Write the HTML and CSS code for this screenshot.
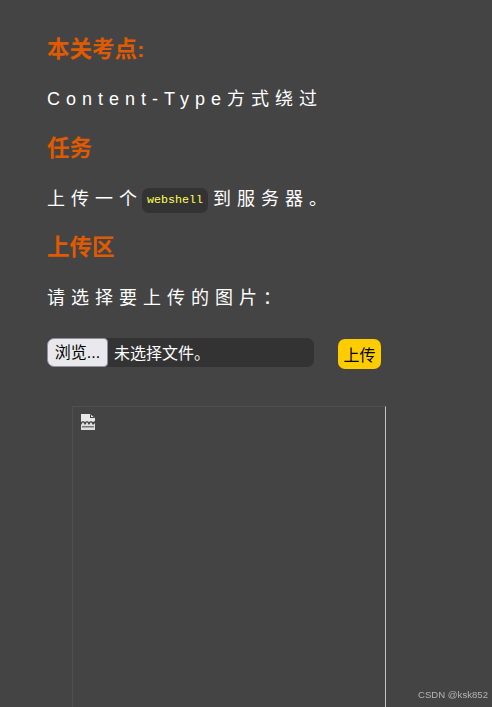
FILE: index.html
```html
<!DOCTYPE html>
<html lang="zh-CN">
<head>
<meta charset="utf-8">
<title>上传</title>
<link rel="stylesheet" href="styles.css">
</head>
<body>
<main class="page">
  <h3 class="title">本关考点:</h3>
  <p class="text lead">Content-Type方式绕过</p>
  <h3 class="title">任务</h3>
  <p class="text">上传一个<code class="code">webshell</code>到服务器。</p>
  <h3 class="title">上传区</h3>
  <p class="text">请选择要上传的图片：</p>
  <form class="upload">
    <div class="file">
      <span class="browse">浏览...</span>
      <span class="file-name">未选择文件。</span>
    </div>
    <button class="submit" type="button">上传</button>
  </form>
  <div class="preview">
    <svg class="broken" width="16" height="17" viewBox="0 0 16 17" aria-hidden="true">
      <path fill="#e8e8e8" d="M1 1h9l5 4v3l-2 1-2-1-2 1-2-1-2 1-2-1-2 1z"/>
      <path fill="#444444" d="M10 1v4h5l-1-1h-3V2z"/>
      <path fill="#e0e0e0" d="M1 12l2-3 2 3 2-3 2 3 2-3 2 3 2-2v7H1z"/>
      <path fill="#777777" d="M2 13h12v1.500H2z"/>
    </svg>
  </div>
</main>
<div class="watermark">CSDN @ksk852</div>
</body>
</html>
```
FILE: styles.css
```css
html, body {
  margin: 0;
  height: 100%;
}
body {
  background: #444444;
  overflow: hidden;
  font-family: "Liberation Sans", "Noto Sans CJK SC", sans-serif;
  color: #ffffff;
}
.page {
  padding: 34.5px 0 0 47px;
  display: flex;
  flex-direction: column;
  align-items: flex-start;
}
.title {
  margin: 0;
  height: 30px;
  line-height: 30px;
  font-size: 22.5px;
  font-weight: 700;
  color: #e05a00;
}
.text {
  margin: 20px 0 19px;
  height: 30px;
  line-height: 30px;
  font-size: 18px;
  letter-spacing: 6px;
}
.lead {
  margin: 19px 0 20px;
}
.code {
  display: inline-block;
  height: 25px;
  line-height: 25px;
  margin: 0 5px 0 -1px;
  padding: 0 5px;
  border-radius: 7px;
  background: #333333;
  color: #ffff55;
  font-family: "Liberation Mono", monospace;
  font-size: 11.67px;
  letter-spacing: 0;
  vertical-align: 2px;
}
.upload {
  margin-top: 6px;
  display: flex;
  align-items: flex-start;
  gap: 24px;
}
.file {
  width: 267px;
  height: 29px;
  display: flex;
  align-items: center;
  border-radius: 7px;
  background: #333333;
  font-size: 16px;
}
.browse {
  box-sizing: border-box;
  width: 61px;
  height: 29px;
  line-height: 27px;
  text-align: center;
  color: #000000;
  background: #e9e9ed;
  border: 1px solid #8f8f9d;
  border-radius: 7px 4px 4px 7px;
}
.file-name {
  margin-left: 6px;
}
.submit {
  width: 43px;
  height: 30px;
  margin-top: 1px;
  padding: 0;
  border: 0;
  border-radius: 7px;
  background: #ffcc00;
  color: #000000;
  font: 16px "Liberation Sans", "Noto Sans CJK SC", sans-serif;
}
.preview {
  box-sizing: border-box;
  margin: 37px 0 0 25px;
  width: 314px;
  height: 400px;
  padding: 6px 7px;
  border: 1px solid #4f4f4f;
  border-right-color: #c4c4c4;
}
.broken {
  display: block;
}
.watermark {
  position: fixed;
  right: 4px;
  bottom: 6px;
  font-size: 9.6px;
  line-height: 12px;
  color: #b4b4b4;
}
```
